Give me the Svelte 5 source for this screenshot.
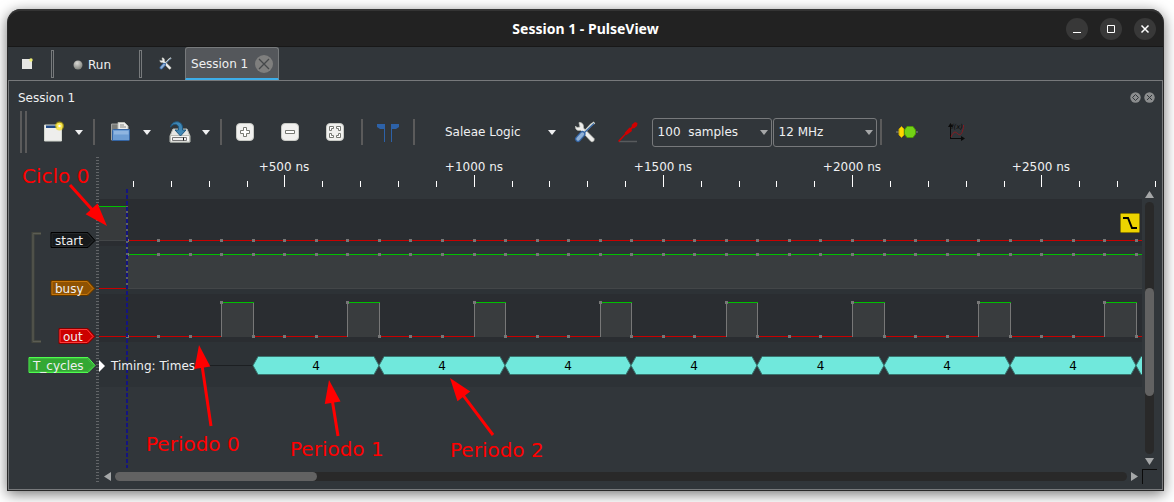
<script>
  let rulerWidth = 1056;
  const samplePx = 31.54;
  const firstSample = 27.6;
  const x = (i) => Math.round(firstSample + i * samplePx);
  const isHigh = (i) => i % 4 === 3;
  $: sampleCount = Math.max(1, Math.floor((rulerWidth - 28) / samplePx) + 1);
  $: samples = Array.from({ length: sampleCount }, (_, i) => i);
  $: periods = Array.from({ length: Math.ceil(sampleCount / 4) }, (_, i) => i);
  $: ticks = Array.from({ length: Math.floor((rulerWidth - 34) / 37.85) + 1 }, (_, i) => {
    const px = Math.round(34 + i * 37.85);
    const major = i % 5 === 4;
    return { x: px, major, label: major && px + 32 < rulerWidth ? '+' + (i + 1) * 100 + ' ns' : '' };
  });
  $: labelledPeriods = periods.filter((p) => (x(p * 4 + 4) + x(p * 4 + 8)) / 2 + 30 < rulerWidth);
  const arrows = [
    { text: 'Ciclo 0', tx: 13, ty: 26, x1: 61, y1: 28, x2: 98, y2: 69 },
    { text: 'Periodo 0', tx: 137, ty: 294, x1: 202, y1: 269, x2: 190, y2: 188 },
    { text: 'Periodo 1', tx: 281, ty: 299, x1: 329, y1: 279, x2: 320, y2: 223 },
    { text: 'Periodo 2', tx: 441, ty: 300, x1: 484, y1: 278, x2: 441, y2: 221 }
  ];
  const head = (a) => {
    const len = Math.hypot(a.x2 - a.x1, a.y2 - a.y1);
    const ux = (a.x2 - a.x1) / len;
    const uy = (a.y2 - a.y1) / len;
    const bx = a.x2 - ux * 23;
    const by = a.y2 - uy * 23;
    return `${a.x2},${a.y2} ${bx - uy * 8},${by + ux * 8} ${bx + uy * 8},${by - ux * 8}`;
  };
  const shaft = (a) => {
    const len = Math.hypot(a.x2 - a.x1, a.y2 - a.y1);
    return { x: a.x2 - ((a.x2 - a.x1) / len) * 20, y: a.y2 - ((a.y2 - a.y1) / len) * 20 };
  };
  const tags = [
    { name: 'start', w: 44, y: 43, fill: '#16191b', line: '#000', inner: '#24282a' },
    { name: 'busy', w: 44, y: 91, fill: '#8f5202', line: '#5c3500', inner: '#c67508' },
    { name: 'out', w: 36, y: 139, fill: '#cc0000', line: '#800000', inner: '#ff3b3b' },
    { name: 'T_cycles', w: 66, y: 168, fill: '#33a833', line: '#4dff4d', inner: '#3fb83f' }
  ];
</script>

{#snippet wrench(size)}
  <svg width={size} height={size} viewBox="0 0 22 22" aria-hidden="true">
    <path d="M5 2 6 6 3 6.500 1.500 5C1 9 4 10 6.500 9.200L17 20.500q2 1 3-1t-1-3L9.500 7C10 3.500 8 1 5 1.500z" fill="#eeeeec" stroke="#babdb6" stroke-width=".7" />
    <path d="M20.500 1.500 17 4 9 12.500" fill="none" stroke="#d3d7cf" stroke-width="2.500" />
    <path d="M20 2.500 10 12" stroke="#3465a4" stroke-width="1.200" />
    <path d="M8.500 13 4 18" stroke="#3465a4" stroke-width="6" stroke-linecap="round" />
    <path d="M8.500 13 4 18" stroke="#8fb0d6" stroke-width="3.500" stroke-linecap="round" />
  </svg>
{/snippet}

{#snippet caret()}
  <svg class="caret" width="8" height="5" viewBox="0 0 8 5" aria-hidden="true"><path d="M0 0h8L4 5z" fill="currentColor" /></svg>
{/snippet}

<div class="desktop">
  <main class="window">
    <header class="titlebar">
      <h1>Session 1 - PulseView</h1>
      <div class="controls">
        <button aria-label="Minimize"><svg width="22" height="22"><path d="M7 14.500h8" stroke="#fff" /></svg></button>
        <button aria-label="Maximize"><svg width="22" height="22"><path d="M7.500 7.500h7v7h-7z" fill="none" stroke="#fff" /></svg></button>
        <button aria-label="Close"><svg width="22" height="22"><path d="m7.500 7.500 7 7m0-7-7 7" stroke="#fff" stroke-width="1.500" /></svg></button>
      </div>
    </header>

    <nav class="tabs">
      <button class="flat newtab" aria-label="New session">
        <svg width="12" height="12"><path d="M1 1h10v10H1z" fill="#e6e6e3" /><circle cx="10" cy="2" r="1.700" fill="#eded74" /></svg>
      </button>
      <i class="bar"></i>
      <button class="flat run">
        <svg width="10" height="10"><defs><radialGradient id="led" cx=".4" cy=".3" r=".7"><stop offset="0" stop-color="#d8d8d4" /><stop offset="1" stop-color="#81837d" /></radialGradient></defs><circle cx="5" cy="5" r="4.500" fill="url(#led)" /></svg>
        <span>Run</span>
      </button>
      <i class="bar"></i>
      <button class="flat settings" aria-label="Settings">{@render wrench(13)}</button>
      <div class="tab">
        <span>Session 1</span>
        <button class="flat" aria-label="Close tab"><svg width="18" height="18"><circle cx="9" cy="9" r="9" fill="#7f7f7e" /><path d="m4 4 10 10m0-10L4 14" stroke="#45484a" stroke-width="1.300" /></svg></button>
      </div>
    </nav>

    <section class="session">
      <div class="dock">
        <h2>Session 1</h2>
        <div class="dockbuttons">
          <button class="flat" aria-label="Float"><svg width="11" height="11"><circle cx="5.500" cy="5.500" r="5.200" fill="#8b8d8e" /><path d="m5.500 2.500 3 3-3 3-3-3z" fill="none" stroke="#31363a" /></svg></button>
          <button class="flat" aria-label="Close session"><svg width="11" height="11"><circle cx="5.500" cy="5.500" r="5.200" fill="#8b8d8e" /><path d="m3 3 5 5m0-5L3 8" stroke="#31363a" /></svg></button>
        </div>
      </div>

      <div class="toolbar">
        <i class="grip"></i>
        <button class="flat new" aria-label="New view">
          <svg width="22" height="22"><path d="M2.500 4h17v16h-17z" fill="#eeeeec" stroke="#d3d7cf" /><path d="M4 4.500h12V7H4z" fill="#204a87" /><circle cx="17.500" cy="5" r="4.500" fill="#edd400" opacity=".55" /><circle cx="17.500" cy="5" r="3.200" fill="#fce94f" /><circle cx="17.500" cy="5" r="1.200" fill="#fff" /></svg>
          {@render caret()}
        </button>
        <i class="sep"></i>
        <button class="flat open" aria-label="Open">
          <svg width="22" height="22"><path d="M1.500 3h6l2 2H17v14H1.500z" fill="#7b7d7a" stroke="#a3a5a2" /><path d="M8 1.500h6.500L18 5v9H8z" fill="#eeeeec" stroke="#babdb6" /><path d="M10 4h4m-4 2h6" stroke="#888a85" /><path d="M2.500 9.500Q2.500 8.500 3.500 8.500h16v10q0 1-1 1h-16z" fill="#6d9dd3" stroke="#3465a4" /><path d="M4 10h14.500v3.500H4z" fill="#8fb5e0" /></svg>
          {@render caret()}
        </button>
        <button class="flat save" aria-label="Save">
          <svg width="24" height="24"><path d="M5 9h14l3 7v6H2v-6z" fill="#e6e6e3" stroke="#babdb6" /><path d="M2.500 15.500h19V22h-19z" fill="#f5f5f4" stroke="#babdb6" /><path d="M4.500 17.500h14v3h-14z" fill="#eee" stroke="#777" /><path d="M15.500 17.500v3" stroke="#111" /><path d="M2.500 7C4 0 14 0 14.500 7v3H18l-5.500 6L7 10h3.500V7C9.500 4 6 3 2.500 7z" fill="#3f87b5" stroke="#1f587f" /></svg>
          {@render caret()}
        </button>
        <i class="sep"></i>
        <button class="flat zoom" aria-label="Zoom in"><svg width="20" height="20"><rect x="1.500" y="1.500" width="17" height="17" rx="3.500" fill="#f1f1ef" stroke="#c8cac5" /><path d="M8.500 5.500h3v3h3v3h-3v3h-3v-3h-3v-3h3z" fill="#fff" stroke="#777973" /></svg></button>
        <button class="flat zoom" aria-label="Zoom out"><svg width="20" height="20"><rect x="1.500" y="1.500" width="17" height="17" rx="3.500" fill="#f1f1ef" stroke="#c8cac5" /><path d="M5.500 8.500h9v3h-9z" fill="#fff" stroke="#777973" /></svg></button>
        <button class="flat zoom" aria-label="Zoom to fit"><svg width="20" height="20"><rect x="1.500" y="1.500" width="17" height="17" rx="3.500" fill="#f1f1ef" stroke="#c8cac5" /><path d="M4.500 8.500v-4h4v2h-2v2zM11.500 4.500h4v4h-2v-2h-2zM4.500 11.500v4h4v-2h-2v-2zM15.500 11.500v4h-4v-2h2v-2z" fill="#fff" stroke="#777973" /></svg></button>
        <i class="sep wide"></i>
        <button class="flat flags" aria-label="Show cursors"><svg width="24" height="22"><path d="M1 3h8v18H8V8H4L1 6zM23 3h-8v18h1V8h4l3-2z" fill="#2d62a8" /></svg></button>
        <i class="sep"></i>
        <button class="flat device">Saleae Logic {@render caret()}</button>
        <button class="flat config" aria-label="Configure device">{@render wrench(22)}</button>
        <button class="flat probe" aria-label="Configure channels"><svg width="22" height="22"><path d="M2 20.500h18" stroke="#585b5d" stroke-width="1.500" /><path d="M1.500 20.500 9 12.500" stroke="#d00000" stroke-width="1.500" /><path d="m7.500 12 5-5.500 1 .5 1.500-2-.5-1L18 1l2.500 1-.5 3-3 2.500-1-.5-1.500 1.500.5 1.500-5.500 4z" fill="#d00000" /></svg></button>
        <label class="combo samples"><select aria-label="Sample count"><option>100&nbsp; samples</option></select>{@render caret()}</label>
        <label class="combo rate"><select aria-label="Sample rate"><option>12 MHz</option></select>{@render caret()}</label>
        <i class="sep"></i>
        <button class="flat decoder" aria-label="Add decoder"><svg width="22" height="14"><path d="M0 7h22" stroke="#888a85" /><path d="M5.500 1.500 8 4v6l-2.500 2.500L3 10V4z" fill="#fcd800" stroke="#c4a000" /><path d="M11 1.500h6L19.500 5v4L17 12.500h-6L8.500 9V5z" fill="#73d216" stroke="#4e9a06" /></svg></button>
        <button class="flat math" aria-label="Add math signal"><svg width="18" height="18"><path d="M2.500 16V3M2 15.500h13" stroke="#0b0b0b" /><path d="M0 4 2.500 0 5 4zM13 13l4 2.500-4 2.500z" fill="#0b0b0b" /><path d="M3 14C6 7 8 9 10 11s5 0 5.500-9" fill="none" stroke="#8c1a20" /><text x="3" y="6" fill="#0b0b0b">f(x)</text></svg></button>
      </div>

      <div class="view">
        <svg class="labels" width="88" height="280">
          <path d="M32 44.500h-8v108h8" fill="none" stroke="#45473f" stroke-width="3" />
          <path d="M32 44.500h-8v108h8" fill="none" stroke="#5b5d54" />
          {#each tags as t}
            <path d="M{86 - t.w} {t.y + .5}h{t.w - 7}l7 8-7 7h-{t.w - 7}z" fill={t.fill} stroke={t.line} />
            <path d="M{87 - t.w} {t.y + 1.5}h{t.w - 9}l6 7-6 6h-{t.w - 9}z" fill="none" stroke={t.inner} />
            <text x={90 - t.w} y={t.y + 13} fill="#eff0f1">{t.name}</text>
          {/each}
        </svg>
        <i class="splitter"></i>
        <div class="ruler" bind:clientWidth={rulerWidth}>
          <svg width="100%" height="32">
            {#each ticks as t}
              <path d="M{t.x + .5} {t.major ? 18 : 24}V30" stroke="#fff" />
              {#if t.label}<text x={t.x} y="14" text-anchor="middle" fill="#eff0f1">{t.label}</text>{/if}
            {/each}
          </svg>
        </div>
        <div class="traces">
          <svg width="100%" height="280">
            <rect y="10" width="100%" height="47" fill="#2a2d31" />
            <rect y="57" width="100%" height="48" fill="#2d3236" />
            <rect y="105" width="100%" height="48" fill="#2a2d31" />
            <rect y="153" width="100%" height="45" fill="#2d3236" />
            <rect y="17" width="28" height="34" fill="#373a3c" />
            <path d="M0 51.500h28" stroke="#434648" />
            <path d="M0 17.500h28" stroke="#00c000" />
            <line x1="28" x2="100%" y1="51.500" y2="51.500" stroke="#c80000" />
            <rect x="28" y="65" width="100%" height="35" fill="#393d3f" />
            <line x1="28" x2="100%" y1="99.500" y2="99.500" stroke="#434648" />
            <path d="M0 99.500h28" stroke="#c80000" />
            <line x1="28" x2="100%" y1="65.500" y2="65.500" stroke="#00c000" />
            <line x1="0" x2="100%" y1="147.500" y2="147.500" stroke="#c80000" />
            {#each periods as p}
              <rect x={x(p * 4 + 3)} y="113" width={x(p * 4 + 4) - x(p * 4 + 3)} height="35" fill="#393c3e" />
              <path d="M{x(p * 4 + 3) + .5} 148V113M{x(p * 4 + 4) + .5} 148V113" stroke="#777" />
              <path d="M{x(p * 4 + 3)} 113.500H{x(p * 4 + 4) + 1}" stroke="#00c000" />
            {/each}
            {#each samples as i}
              <rect x={x(i) - 1} y="50" width="3" height="3" fill="#777" />
              <rect x={x(i) - 1} y="64" width="3" height="3" fill="#777" />
              <rect x={x(i) - 1} y={isHigh(i) ? 112 : 146} width="3" height="3" fill="#777" />
            {/each}
            <line x1="96" x2="100%" y1="176.500" y2="176.500" stroke="#1c1f22" />
            {#each periods as p}
              <path d="M{x(p * 4 + 4)} 176.500l5-9H{x(p * 4 + 8) - 5}l5 9-5 9H{x(p * 4 + 4) + 5}z" fill="#70e8dc" stroke="#38746e" />
            {/each}
            {#each labelledPeriods as p}
              <text x={(x(p * 4 + 4) + x(p * 4 + 8)) / 2} y="181" text-anchor="middle" fill="#000">4</text>
            {/each}
            <path d="M28 17v83" stroke="#606366" stroke-width="2" />
            <path d="M28 0v279" stroke="#141480" stroke-width="2" stroke-dasharray="4 2" />
            <path d="M0 171v12l6-6z" fill="#fff" />
            <text x="12" y="181" fill="#eff0f1">Timing: Times</text>
          </svg>
          <svg class="trigger" width="20" height="20"><rect x=".5" y=".5" width="19" height="19" rx="1" fill="#edd400" stroke="#8a7a00" /><path d="M3 5h5l4 10h5" fill="none" stroke="#000" stroke-width="2" /></svg>
        </div>
        <div class="vscroll">
          <button class="flat" aria-label="Scroll up"><svg width="9" height="7"><path d="M0 7h9L4.500 0z" fill="#a5a7a8" /></svg></button>
          <div class="track"><i></i></div>
          <button class="flat" aria-label="Scroll down"><svg width="9" height="7"><path d="M0 0h9L4.500 7z" fill="#a5a7a8" /></svg></button>
        </div>
        <div class="hscroll">
          <button class="flat" aria-label="Scroll left"><svg width="7" height="9"><path d="M7 0v9L0 4.500z" fill="#a5a7a8" /></svg></button>
          <div class="track"><i></i></div>
          <button class="flat" aria-label="Scroll right"><svg width="7" height="9"><path d="M0 0v9l7-4.500z" fill="#a5a7a8" /></svg></button>
        </div>
        <i class="corner"></i>
        <svg class="notes" width="100%" height="100%">
          {#each arrows as a}
            <line x1={a.x1} y1={a.y1} x2={shaft(a).x} y2={shaft(a).y} stroke="#f00" stroke-width="3" />
            <polygon points={head(a)} fill="#f00" />
            <text x={a.tx} y={a.ty} fill="#f00">{a.text}</text>
          {/each}
        </svg>
      </div>
    </section>
  </main>
</div>

<style>
  :global(body) { background: #fff; overflow: hidden; }
  * { box-sizing: border-box; }
  .desktop { padding: 9px 10px 32px 7px; font: 12px/16px "DejaVu Sans", sans-serif; color: #eff0f1; }
  svg { display: block; flex: none; }
  i { display: block; flex: none; }
  .window { background: #31363a; border: 1px solid #2a2a2a; border-top: 0; border-radius: 14px 14px 0 0; box-shadow: 0 3px 14px rgba(0, 0, 0, .55); }
  .titlebar { height: 38px; display: grid; grid-template-columns: 1fr auto 1fr; align-items: center; background: #222; border-top: 2px solid #343434; border-bottom: 1px solid #181818; border-radius: 13px 13px 0 0; }
  h1 { grid-column: 2; margin: 0; font: bold 14px/20px "Noto Sans", sans-serif; color: #fff; }
  .controls { display: flex; justify-content: flex-end; gap: 12px; padding-right: 7px; }
  .controls button { width: 22px; height: 22px; padding: 0; border: 0; border-radius: 50%; background: #383838; }
  .flat { display: flex; align-items: center; padding: 0; border: 0; background: none; color: inherit; font: inherit; }
  .tabs { display: flex; align-items: center; height: 33px; }
  .newtab { padding: 0 18px 0 13px; }
  .bar { width: 3px; height: 28px; border: 1px solid #777a7c; }
  .run { gap: 5px; padding: 2px 28px 0 19px; }
  .settings { padding: 0 13px 0 17px; }
  .tab { display: flex; align-items: center; gap: 7px; height: 33px; padding: 1px 5px 0; background: #54575b; border: 1px solid #777a7c; border-bottom: 2px solid #3daee9; border-radius: 3px 3px 0 0; }
  .session { border: 1px solid #77797b; padding-bottom: 5px; }
  .dock { display: flex; justify-content: space-between; align-items: center; height: 32px; padding: 1px 7px 0 9px; }
  h2 { margin: 0; font: inherit; }
  .dockbuttons { display: flex; gap: 3px; }
  .toolbar { display: flex; align-items: center; height: 38px; padding-left: 11px; margin-bottom: 6px; }
  .grip { width: 7px; height: 42px; border: 2px solid #5b5b5b; border-width: 0 2px; }
  .sep { width: 2px; height: 26px; background: #5b5b5b; }
  .wide { margin-left: 4px; }
  .new { gap: 11px; padding: 0 10px 0 15px; }
  .open { gap: 11px; padding: 0 17px 0 15px; }
  .save { gap: 10px; padding: 0 10px 0 0; }
  .zoom { padding: 0 12px 0 13px; }
  .flags { padding: 0 13px; }
  .device { gap: 27px; padding: 0 18px 0 30px; }
  .config { padding-right: 21px; }
  .probe { padding-right: 13px; }
  .combo { position: relative; height: 29px; margin-right: 1px; }
  .samples { width: 120px; }
  .rate { width: 104px; margin-right: 3px; }
  .combo .caret { position: absolute; right: 4px; top: 12px; color: #a5a7a8; pointer-events: none; }
  select { appearance: none; width: 100%; height: 29px; padding: 0 5px; border: 1px solid #77797b; border-radius: 3px; background: none; color: inherit; font: inherit; }
  .decoder { padding: 0 30px 0 14px; }
  .view { position: relative; display: grid; grid-template-columns: 87px 3px 1fr 20px; grid-template-rows: 32px 280px 15px; }
  text { font: 12px "DejaVu Sans", sans-serif; }
  .math text { font: italic 7px "DejaVu Sans", sans-serif; }
  .labels { grid-area: 2 / 1; }
  .splitter { grid-area: 1 / 2 / 4 / 3; background: repeating-linear-gradient(#626568 0 1px, transparent 1px 3px); }
  .ruler { grid-area: 1 / 3 / 2 / 5; min-width: 0; overflow: hidden; }
  .traces { grid-area: 2 / 3; position: relative; min-width: 0; overflow: hidden; }
  .trigger { position: absolute; right: 2px; top: 24px; }
  .vscroll { grid-area: 2 / 4; display: flex; flex-direction: column; align-items: center; gap: 4px; padding: 2px 6px 4px 0; }
  .track { flex: 1; background: #292929; border-radius: 5px; }
  .track i { background: #626262; border-radius: 5px; }
  .vscroll .track { width: 9px; }
  .vscroll .track i { height: 43%; margin-top: 86px; }
  .hscroll { grid-area: 3 / 3; display: flex; align-items: center; gap: 4px; padding: 0 4px 0 5px; }
  .hscroll .track { height: 9px; }
  .hscroll .track i { width: 20%; height: 9px; }
  .corner { grid-area: 3 / 4; width: 15px; border: 1px solid #0b0b0b; border-width: 1px 0 0 1px; }
  .notes { position: absolute; inset: 0; pointer-events: none; }
  .notes text { font-size: 20px; }
</style>
